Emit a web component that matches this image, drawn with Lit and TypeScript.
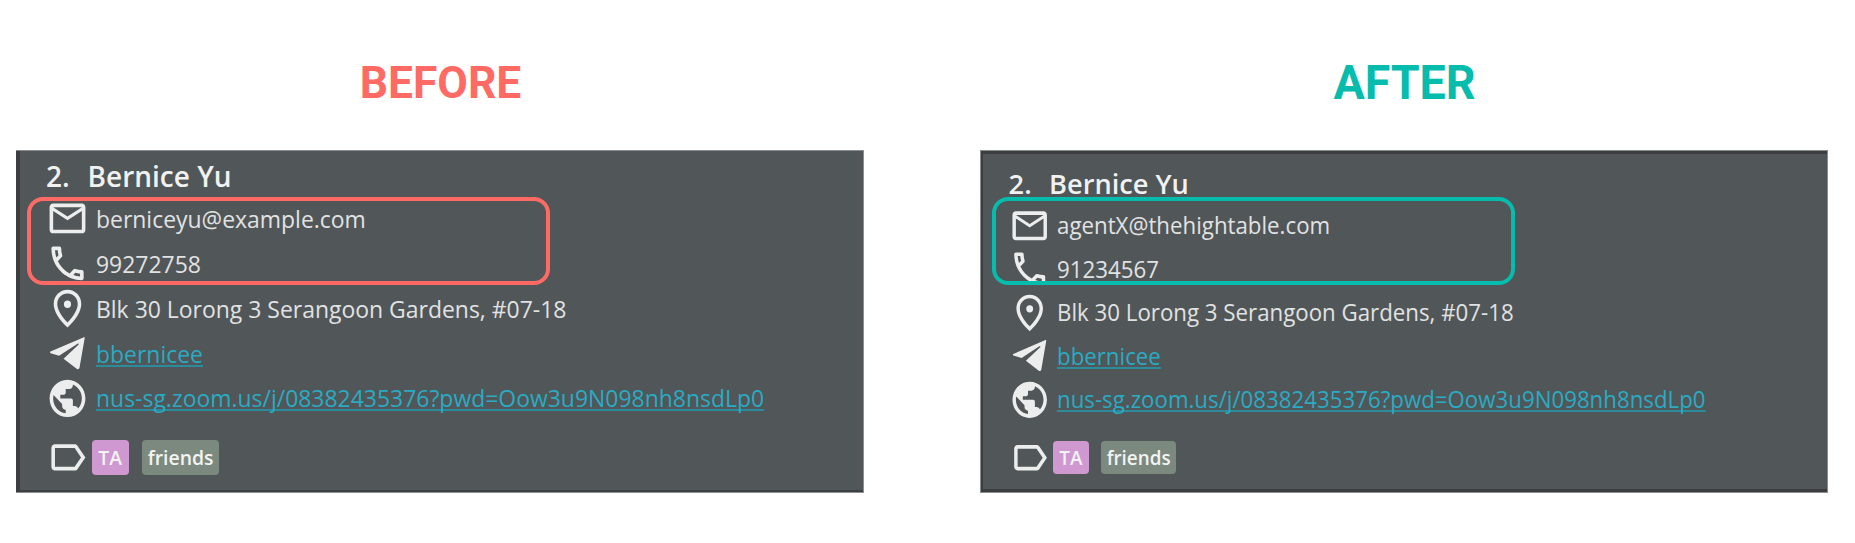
import { LitElement, html, css, svg } from "lit";
import { customElement, property } from "lit/decorators.js";

const ICONS: Record<string, string> = {
  mail: "M22 6c0-1.100-.9-2-2-2H4c-1.100 0-2 .9-2 2v12c0 1.100.9 2 2 2h16c1.100 0 2-.9 2-2V6zm-2 0l-8 5-8-5h16zm0 12H4V8l8 5 8-5v10z",
  phone:
    "M6.540 5c.060.890.210 1.760.450 2.590l-1.200 1.200c-.410-1.200-.670-2.470-.760-3.790h1.510m9.860 12.020c.850.240 1.720.390 2.600.450v1.490c-1.320-.090-2.590-.350-3.800-.750l1.200-1.190M7.500 3H4c-.550 0-1 .450-1 1 0 9.390 7.610 17 17 17 .550 0 1-.450 1-1v-3.490c0-.550-.450-1-1-1-1.240 0-2.450-.200-3.570-.570-.100-.040-.210-.050-.310-.050-.260 0-.510.100-.710.290l-2.200 2.200c-2.830-1.450-5.150-3.760-6.590-6.590l2.200-2.200c.280-.280.360-.670.250-1.020C8.700 6.450 8.500 5.250 8.500 4c0-.550-.450-1-1-1z",
  place:
    "M12 2C7.700 2 4.300 5.300 4.300 9.600C4.300 13.500 7.200 17.800 12 22.200C16.800 17.800 19.700 13.500 19.700 9.600C19.700 5.300 16.300 2 12 2z M12 4C15.200 4 17.700 6.400 17.700 9.600C17.700 12.400 15.700 15.800 12 19.500C8.300 15.800 6.300 12.400 6.300 9.600C6.300 6.400 8.800 4 12 4z M12 7.800a2 2 0 1 0 0 4a2 2 0 1 0 0-4z",
  telegram: "M21.500 3.200L2.500 11C2.100 11.200 2.200 11.700 2.600 11.900L7.300 13.300L17.600 6.800C18.100 6.500 18.500 6.900 18.100 7.300L9.800 14.800L17.300 20.300C17.900 20.700 18.500 20.400 18.700 19.700L21.600 3.700Z",
  globe:
    "M12 2C6.480 2 2 6.480 2 12s4.480 10 10 10 10-4.480 10-10S17.520 2 12 2zm-1 17.930c-3.950-.490-7-3.850-7-7.930 0-.620.080-1.210.210-1.790L9 15v1c0 1.100.9 2 2 2v1.930zm6.900-2.540c-.260-.810-1-1.390-1.900-1.390h-1v-3c0-.550-.450-1-1-1H8v-2h2c.550 0 1-.450 1-1V7h2c1.100 0 2-.9 2-2v-.410c2.930 1.190 5 4.060 5 7.410 0 2.080-.8 3.970-2.100 5.390z",
  label:
    "M17.630 5.840C17.270 5.330 16.670 5 16 5L5 5.010C3.900 5.010 3 5.900 3 7v10c0 1.100.9 1.990 2 1.990L16 19c.670 0 1.270-.33 1.630-.84L22 12l-4.370-6.160zM16 17H5V7h11l3.550 5L16 17z",
};

const glyph = (name: string) => html`
  <svg class="icon" viewBox="0 0 24 24" preserveAspectRatio="none" aria-hidden="true">
    ${svg`<path fill-rule=${name === "place" ? "evenodd" : "nonzero"} d=${ICONS[name]}></path>`}
  </svg>
`;

interface Contact {
  email: string;
  phone: string;
}

@customElement("contact-card")
class ContactCard extends LitElement {
  @property({ attribute: false }) contact!: Contact;

  static styles = css`
    :host {
      --row: 44.85px;
      --text: 24px;
      --title: 28px;
      --icon-w: 43px;
      --top: 5.2px;
      --title-h: 40.1px;
      --pad: 26px;
      --gap: 7.2px;
      --name-x: 41.6px;
      --tag-top: 19.5px;
      --tag-h: 35px;
      --tag-gap: 13.2px;
      --ta-gap: 2.8px;
      --ta-w: 37px;
      --friends-w: 77.3px;
      --accent: #ff6b64;
      display: block;
      position: relative;
      box-sizing: border-box;
      width: 848px;
      height: 343px;
      background: #515658;
      border: 1px solid #8b8e8f;
      border-left: 0;
      box-shadow: inset 4px 0 #3b3d3e, inset 0 -2px #3d4042;
      font-family: "Open Sans", "Noto Sans", sans-serif;
      color: #e1e2e2;
    }
    :host([variant="after"]) {
      --row: 43.5px;
      --text: 23.3px;
      --title: 27.2px;
      --icon-w: 41.4px;
      --top: 14.4px;
      --title-h: 38.4px;
      --pad: 27.6px;
      --gap: 6.7px;
      --name-x: 40.5px;
      --tag-top: 19.3px;
      --tag-h: 33.7px;
      --tag-gap: 12.3px;
      --ta-gap: 3.2px;
      --ta-w: 35.7px;
      --friends-w: 75px;
      --accent: #06bcad;
      border-left: 1px solid #8b8e8f;
      box-shadow: inset 2px 0 #3b3d3e, inset 0 3px #3b3d3e, inset 0 -3px #3b3d3e;
    }
    .body {
      display: flex;
      flex-direction: column;
      padding-top: var(--top);
      padding-left: calc(var(--pad) + 4px);
    }
    :host([variant="after"]) .body {
      padding-left: var(--pad);
    }
    .title {
      display: grid;
      grid-template-columns: var(--name-x) auto;
      height: var(--title-h);
      line-height: var(--title-h);
      font-size: var(--title);
      font-weight: 550;
      color: #f0f1f1;
      white-space: nowrap;
    }
    .row {
      display: flex;
      align-items: center;
      gap: var(--gap);
      height: var(--row);
    }
    .icon {
      display: block;
      flex: none;
      width: var(--icon-w);
      height: var(--row);
      fill: #eceeee;
    }
    .text {
      padding-top: 1.4px;
      font-size: var(--text);
      line-height: var(--row);
      white-space: nowrap;
      transform: scaleX(0.956);
      transform-origin: 0 50%;
    }
    .link {
      color: #2aabc3;
      text-decoration: underline 2px #2c8c9c;
      text-underline-offset: 2px;
      text-decoration-skip-ink: none;
    }
    .tags {
      display: flex;
      align-items: center;
      height: var(--tag-h);
      margin-top: var(--tag-top);
    }
    .tags .icon {
      margin-right: var(--ta-gap);
    }
    .tag {
      display: flex;
      justify-content: center;
      height: var(--tag-h);
      border-radius: 4px;
      line-height: var(--tag-h);
      font-size: calc(var(--text) * 0.825);
      font-weight: 600;
      color: #f2f3f3;
    }
    .tag span {
      transform: scaleX(0.98);
    }
    .ta {
      width: var(--ta-w);
      margin-right: var(--tag-gap);
      background: #cf98d0;
    }
    .friends {
      width: var(--friends-w);
      background: #7b897f;
    }
    .mark {
      position: absolute;
      left: 11px;
      top: 46px;
      box-sizing: border-box;
      width: 523px;
      height: 88px;
      border: 4px solid var(--accent);
      border-radius: 16px;
    }
  `;

  render() {
    const { email, phone } = this.contact;
    const row = (icon: string, content: string, link = false) => html`
      <div class="row">
        ${glyph(icon)}
        ${link ? html`<a class="text link">${content}</a>` : html`<span class="text">${content}</span>`}
      </div>
    `;
    return html`
      <div class="body">
        <div class="title"><span>2.</span><span>Bernice Yu</span></div>
        ${row("mail", email)} ${row("phone", phone)}
        ${row("place", "Blk 30 Lorong 3 Serangoon Gardens, #07-18")}
        ${row("telegram", "bbernicee", true)}
        ${row("globe", "nus-sg.zoom.us/j/08382435376?pwd=Oow3u9N098nh8nsdLp0", true)}
        <div class="tags">
          ${glyph("label")}
          <div class="tag ta"><span>TA</span></div>
          <div class="tag friends"><span>friends</span></div>
        </div>
      </div>
      <div class="mark"></div>
    `;
  }
}

@customElement("app-root")
class AppRoot extends LitElement {
  static styles = css`
    :host {
      display: grid;
      grid-template-columns: 848px 848px;
      grid-template-rows: 150px 343px;
      column-gap: 116px;
      box-sizing: border-box;
      height: 543px;
      padding-left: 16px;
      background: #fff;
      overflow: hidden;
    }
    .heading {
      margin: 0;
      padding-top: 57px;
      padding-left: 1px;
      text-align: center;
      font: 700 45px/52px Roboto, sans-serif;
      color: #ff6b64;
      transform: scaleX(0.985);
    }
    .after {
      font-size: 48px;
      color: #06bcad;
      transform: scaleX(0.97);
    }
  `;

  render() {
    return html`
      <h1 class="heading">BEFORE</h1>
      <h1 class="heading after">AFTER</h1>
      <contact-card .contact=${{ email: "berniceyu@example.com", phone: "99272758" }}></contact-card>
      <contact-card
        variant="after"
        .contact=${{ email: "agentX@thehightable.com", phone: "91234567" }}
      ></contact-card>
    `;
  }
}
